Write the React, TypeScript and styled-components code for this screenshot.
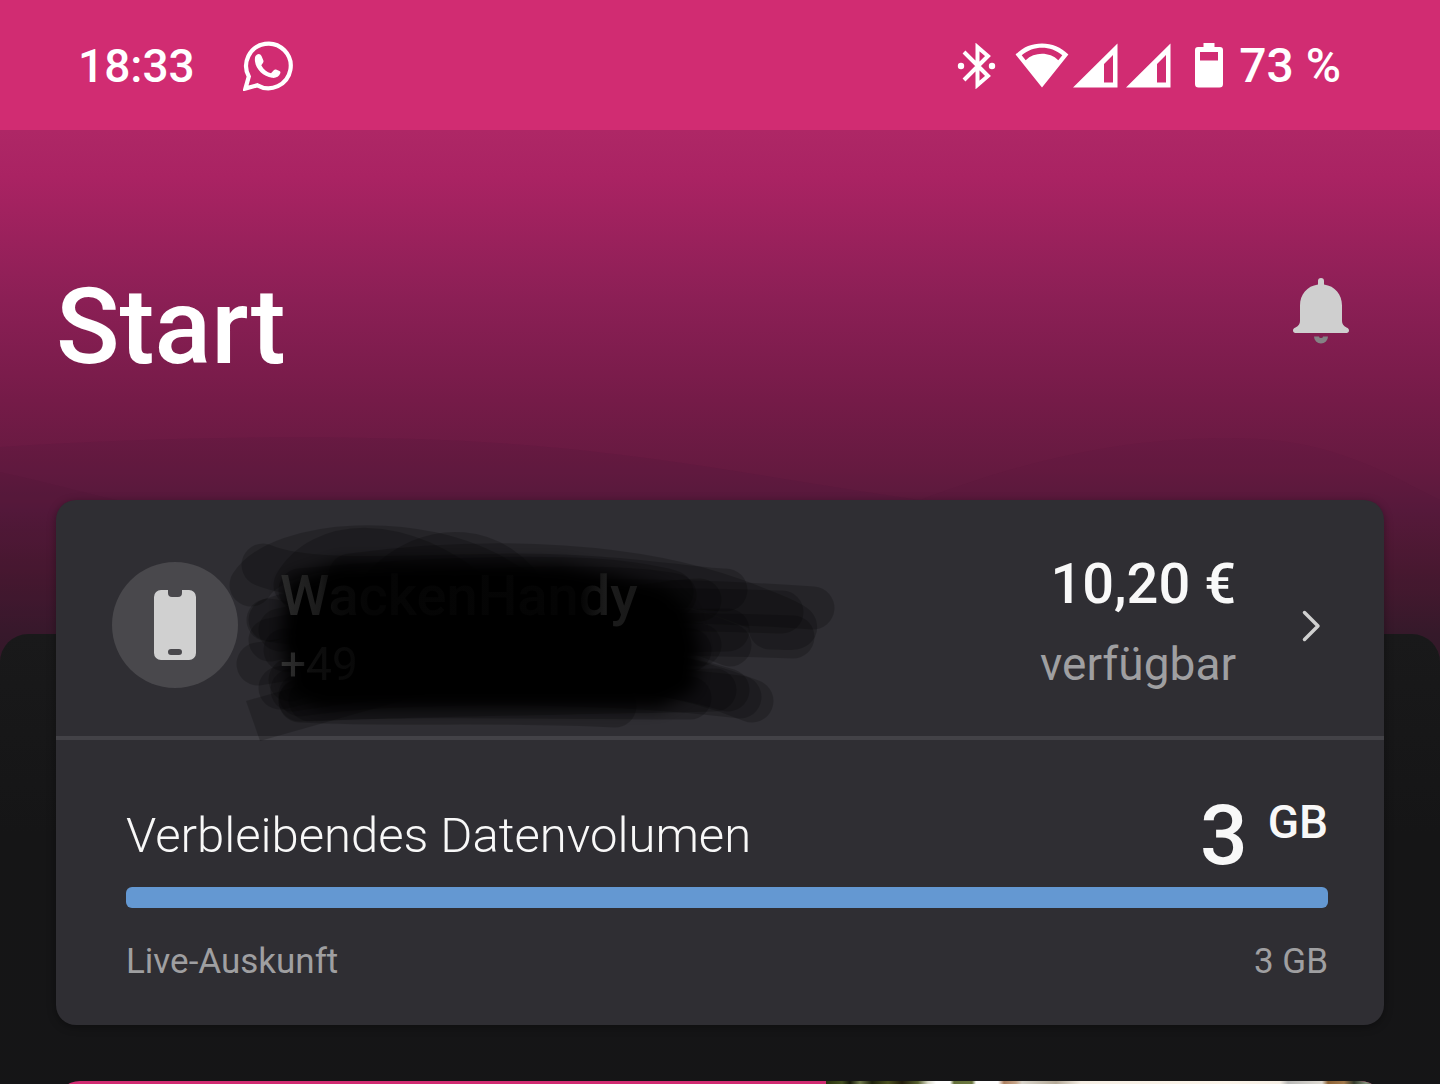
import React from 'react';
import styled, { createGlobalStyle } from 'styled-components';

const GlobalStyle = createGlobalStyle`
  *, *::before, *::after { box-sizing: border-box; }
  body { margin: 0; background: #151516; font-family: Roboto, "Liberation Sans", sans-serif; }
`;

const Screen = styled.div`
  display: flex;
  flex-direction: column;
  height: 100vh;
  overflow: hidden;
  color: #fff;
`;

const StatusBar = styled.header`
  display: flex;
  flex: none;
  justify-content: space-between;
  padding: 40px 99px 0 78px;
  height: 130px;
  background: #d12c72;
`;

const StatusGroup = styled.div<{ $gap: number }>`
  display: flex;
  align-items: center;
  gap: ${(p) => p.$gap}px;
  height: 52px;
`;

const StatusText = styled.span<{ $size: number }>`
  font-size: ${(p) => p.$size}px;
  font-weight: 500;
  line-height: 52px;
  white-space: nowrap;
`;

const Glyph = styled.svg`
  display: block;
  flex: none;
`;

const Backdrop = styled.main`
  position: relative;
  flex: 1;
  background: linear-gradient(
    #ae2766 0px,
    #aa2363 46px,
    #8b1f55 170px,
    #751b48 270px,
    #651a40 340px,
    #581a3c 380px,
    #491930 440px,
    #351a2a 504px,
    #301a27 540px
  );
`;

const Waves = styled.svg`
  position: absolute;
  top: 300px;
  left: 0;
  width: 100%;
  height: 240px;
`;

const TitleBar = styled.div`
  position: relative;
  display: flex;
  align-items: flex-start;
  justify-content: space-between;
  padding: 138px 77px 246px 56px;
`;

const Title = styled.h1`
  margin: 0;
  font-size: 105px;
  font-weight: 500;
  line-height: 120px;
`;

const IconButton = styled.button`
  display: grid;
  place-items: center;
  width: 84px;
  height: 86px;
  padding: 0;
  border: 0;
  background: none;
`;

const Sheet = styled.section`
  position: relative;
  display: flow-root;
  padding: 0 56px;
  border-radius: 28px 28px 0 0;
  background: linear-gradient(#19191a, #151516 200px, #151517);
`;

const Card = styled.article`
  margin-top: -134px;
  border-radius: 20px;
  background: #2f2e33;
  box-shadow: 0 2px 8px rgba(0, 0, 0, 0.35);
`;

const ContractRow = styled.div`
  display: flex;
  align-items: center;
  min-height: 240px;
  padding: 52px 56px 38px;
  border-bottom: 4px solid #434247;
`;

const Avatar = styled.div`
  display: grid;
  flex: none;
  place-items: center;
  width: 126px;
  height: 126px;
  border-radius: 50%;
  background: #49484c;
`;

const Lines = styled.div<{ $end?: boolean }>`
  position: relative;
  display: flex;
  flex-direction: column;
  align-self: flex-start;
  align-items: ${(p) => (p.$end ? 'flex-end' : 'flex-start')};
  gap: ${(p) => (p.$end ? 20 : 8)}px;
  padding-top: ${(p) => (p.$end ? 0 : 12)}px;
  margin-left: ${(p) => (p.$end ? 'auto' : '42px')};
  margin-right: ${(p) => (p.$end ? '52px' : '0')};
`;

const Primary = styled.span`
  color: #f8f8f8;
  font-size: 56px;
  font-weight: 500;
  line-height: 64px;
  white-space: nowrap;
`;

const Secondary = styled.span`
  color: #9f9fa1;
  font-size: 46px;
  line-height: 56px;
  white-space: nowrap;
`;

const HiddenName = styled(Primary)`
  position: relative;
  color: transparent;
  background: linear-gradient(90deg, #2a2a2a 0, #1a1a1a 40px, #0a0a0a 54px, #050505 90px, #040404 300px, #1c1c1c 326px, #181818);
  background-clip: text;
`;

const HiddenNumber = styled(Secondary)`
  position: relative;
  color: transparent;
  background: linear-gradient(90deg, #333 0, #222 22px, #0e0e0e 30px, #080808);
  background-clip: text;
`;

const Scribble = styled.svg`
  position: absolute;
  top: -42px;
  left: -60px;
`;

const Usage = styled.div`
  padding: 54px 56px 41px 70px;
`;

const UsageHead = styled.div`
  display: flex;
  align-items: center;
  justify-content: space-between;
  margin-bottom: 9px;
`;

const UsageLabel = styled.label`
  color: #f8f8f8;
  font-size: 49px;
  font-weight: 300;
  line-height: 60px;
`;

const Volume = styled.div`
  display: flex;
  align-items: flex-start;
  gap: 20px;
  color: #f8f8f8;
  font-weight: 500;
`;

const VolumeValue = styled.span`
  font-size: 84px;
  line-height: 84px;
`;

const VolumeUnit = styled.span`
  font-size: 46px;
  line-height: 56px;
`;

const Meter = styled.progress`
  display: block;
  width: 100%;
  height: 21px;
  border: 0;
  border-radius: 6px;
  overflow: hidden;
  appearance: none;
  background: #49484c;

  &::-webkit-progress-bar { background: #49484c; }
  &::-webkit-progress-value { background: #6498d2; }
`;

const UsageFoot = styled.div`
  display: flex;
  justify-content: space-between;
  margin-top: 32px;
  color: #9f9fa1;
  font-size: 35px;
  line-height: 44px;
`;

const Promo = styled.div`
  display: grid;
  grid-template-columns: 58fr 42fr;
  height: 320px;
  margin-top: 56px;
  border-radius: 24px;
  overflow: hidden;
  background: #d12c72;
`;

const PromoPhoto = styled.div`
  background: linear-gradient(
    90deg,
    #29330f 0, #435020 16px, #15180a 24px, #707b4c 34px, #1d210c 46px, #4a511f 62px,
    #211b0b 76px, #56602e 92px, #dcdccb 102px, #ffffff 110px, #ffffff 124px,
    #65713a 128px, #6c7840 146px, #ffffff 150px, #ffffff 172px, #ad8060 178px,
    #c7a68a 190px, #d9d5cc 196px, #b5aa98 230px, #f5eee4 255px, #fbf4ea 400px,
    #f5eee4 454px, #b9b9b7 462px, #dedad2 496px, #8d6335 502px, #a37a4c 518px,
    #343a2b 528px, #82917a 540px, #222 558px
  );
`;

const WhatsApp = () => (
  <Glyph width="50" height="50" viewBox="0 0 50 50" fill="none" aria-label="WhatsApp">
    <path d="M2.4 47.6 5.800 35.500A22.300 22.300 0 1 1 14.400 44.300Z" stroke="#fff" strokeWidth="4.200" />
    <path
      d="M12.500 15C14.500 12.200 17.300 12.300 18.500 15L20.400 19.500C21 21 19.500 22.500 18.300 24.200C20.500 28.500 24 31.300 28 32.300L31 29C31.600 28.400 32.300 28.300 33 28.600L36.500 30C37.500 30.500 37.600 31.300 37.300 32.300C36.200 36 32.500 37.300 29 36.800C20.500 35.500 13 28.500 12 20.500C11.800 18.500 11.700 16.500 12.500 15Z"
      fill="#fff"
    />
  </Glyph>
);

const Bluetooth = () => (
  <Glyph width="40" height="46" viewBox="0 0 40 46" fill="none">
    <path d="M7 9 31 33 20.500 42V4L31 13 7 37" stroke="#fff" strokeWidth="4" />
    <circle cx="4" cy="23" r="3.200" fill="#fff" />
    <circle cx="35" cy="23" r="3.200" fill="#fff" />
  </Glyph>
);

const Wifi = () => (
  <Glyph width="54" height="46" viewBox="0 0 54 46">
    <path
      fill="#fff"
      fillRule="evenodd"
      d="M27 44.500 .600 11.600C8 4 17 .500 27 .500S46 4 53.400 11.600ZM10.700 17.200C19.500 8.700 34.500 8.700 43.300 17.200L47.300 12.200C35.500 2.300 18.500 2.300 6.700 12.200Z"
    />
  </Glyph>
);

const Signal = () => (
  <Glyph width="45" height="46" viewBox="0 0 45 46">
    <path fill="#fff" fillRule="evenodd" d="M0 44.500 44.500 .500V44.500ZM31 39.500H40V12L31 21Z" />
  </Glyph>
);

const Battery = () => (
  <Glyph width="28" height="46" viewBox="0 0 28 46">
    <path
      fill="#fff"
      fillRule="evenodd"
      d="M8.500 0h11v4H25a3 3 0 0 1 3 3v34a3.500 3.500 0 0 1-3.500 3.500h-21A3.500 3.500 0 0 1 0 41V7a3 3 0 0 1 3-3h5.500ZM5 9v8.500h18V9Z"
    />
  </Glyph>
);

const Bell = () => (
  <Glyph width="56" height="66" viewBox="0 0 56 66">
    <path
      fill="#cfcfcf"
      d="M25 6.500V3a3 3 0 0 1 6 0v3.500C42 8 49 16.500 49 27.500V43c0 3 1.500 5 4.500 6.500 1.700.8 2.500 1.700 2.500 3 0 1.500-1 2.500-2.500 2.500h-51C1 55 0 54 0 52.500c0-1.300.8-2.200 2.500-3C5.500 48 7 46 7 43V27.500C7 16.500 14 8 25 6.500Z"
    />
    <path fill="#858285" d="M21 58.500h5a2 1.500 0 0 0 4 0h5a7 7 0 0 1-14 0Z" />
  </Glyph>
);

const Phone = () => (
  <Glyph width="42" height="70" viewBox="0 0 42 70">
    <path
      fill="#d0d0d0"
      fillRule="evenodd"
      d="M7 0h7v3a4 4 0 0 0 4 4h6a4 4 0 0 0 4-4V0h7a7 7 0 0 1 7 7v56a7 7 0 0 1-7 7H7a7 7 0 0 1-7-7V7a7 7 0 0 1 7-7ZM17 59a3 3 0 0 0 0 6h8a3 3 0 0 0 0-6Z"
    />
  </Glyph>
);

const Chevron = () => (
  <Glyph width="40" height="40" viewBox="0 0 40 40" fill="none">
    <path d="M16.500 7.500 30 21 16.500 34.500" stroke="#d0d0d0" strokeWidth="3.500" strokeLinecap="round" strokeLinejoin="round" />
  </Glyph>
);

const markerStrokes = [
  'M263 565C310 585 420 575 520 575S700 590 726 590',
  'M251 585C280 540 420 530 500 580S650 600 700 600',
  'M295 585C320 540 400 530 480 600',
  'M380 590C430 535 500 545 530 600',
  'M350 575C500 555 640 565 735 600S790 628 770 628',
  'M300 590C450 575 560 578 595 580S670 590 672 592',
  'M270 620C350 590 600 580 675 595',
  'M280 630C450 590 700 600 813 608',
  'M270 640C450 600 700 610 782 612',
  'M268 620C400 640 600 630 793 637',
  'M258 664C400 640 600 630 700 645',
  'M290 680C450 620 600 590 730 645',
  'M285 650C420 660 600 630 728 630',
  'M280 688C400 660 600 640 752 701',
  'M300 695C400 680 600 680 740 697',
  'M292 690C420 670 600 650 728 690',
  'M310 700C400 695 500 695 715 690',
  'M300 700C400 695 500 697 690 698',
  'M300 701C400 706 500 700 615 706',
  'M310 640C400 640 550 640 690 650',
];

const Marker = () => (
  <Scribble width="640" height="240" viewBox="220 510 640 240" fill="none" aria-hidden="true">
    <defs>
      <filter id="soft" x="-10%" y="-20%" width="120%" height="140%">
        <feGaussianBlur stdDeviation="8" />
      </filter>
    </defs>
    <path d="M246 701 440 645V690L260 741Z" fill="#000" opacity=".2" />
    <g stroke="#000" strokeWidth="43" strokeLinecap="round" strokeLinejoin="round">
      {markerStrokes.map((d) => (
        <path key={d} d={d} opacity=".2" />
      ))}
    </g>
    <path
      d="M286 580 340 562 560 564 615 575 665 588 690 610 700 650 695 690 660 708 320 708 290 692 282 640Z"
      fill="#000"
      filter="url(#soft)"
    />
  </Scribble>
);

export default function App() {
  return (
    <Screen>
      <GlobalStyle />
      <StatusBar>
        <StatusGroup $gap={48}>
          <StatusText $size={46}>18:33</StatusText>
          <WhatsApp />
        </StatusGroup>
        <StatusGroup $gap={16}>
          <StatusGroup $gap={18}>
            <Bluetooth />
            <StatusGroup $gap={24}>
              <StatusGroup $gap={4}>
                <Wifi />
                <StatusGroup $gap={8}>
                  <Signal />
                  <Signal />
                </StatusGroup>
              </StatusGroup>
              <Battery />
            </StatusGroup>
          </StatusGroup>
          <StatusText $size={48}>73 %</StatusText>
        </StatusGroup>
      </StatusBar>
      <Backdrop>
        <Waves viewBox="0 430 1440 240" preserveAspectRatio="none" aria-hidden="true">
          <path d="M0 447C200 434 420 434 560 448S780 480 920 500V670H0Z" fill="#401535" opacity=".11" />
          <path d="M920 500C1040 455 1130 438 1230 438S1380 470 1440 500V670H920Z" fill="#401535" opacity=".06" />
          <path d="M0 472C60 485 90 495 140 505V670H0Z" fill="#401535" opacity=".1" />
        </Waves>
        <TitleBar>
          <Title>Start</Title>
          <IconButton aria-label="Benachrichtigungen">
            <Bell />
          </IconButton>
        </TitleBar>
        <Sheet>
          <Card>
            <ContractRow>
              <Avatar>
                <Phone />
              </Avatar>
              <Lines>
                <Marker />
                <HiddenName>WackenHandy</HiddenName>
                <HiddenNumber>+49</HiddenNumber>
              </Lines>
              <Lines $end>
                <Primary>10,20 €</Primary>
                <Secondary>verfügbar</Secondary>
              </Lines>
              <Chevron />
            </ContractRow>
            <Usage>
              <UsageHead>
                <UsageLabel htmlFor="volume">Verbleibendes Datenvolumen</UsageLabel>
                <Volume>
                  <VolumeValue>3</VolumeValue>
                  <VolumeUnit>GB</VolumeUnit>
                </Volume>
              </UsageHead>
              <Meter id="volume" value={3} max={3} />
              <UsageFoot>
                <span>Live-Auskunft</span>
                <span>3 GB</span>
              </UsageFoot>
            </Usage>
          </Card>
          <Promo>
            <span />
            <PromoPhoto />
          </Promo>
        </Sheet>
      </Backdrop>
    </Screen>
  );
}
